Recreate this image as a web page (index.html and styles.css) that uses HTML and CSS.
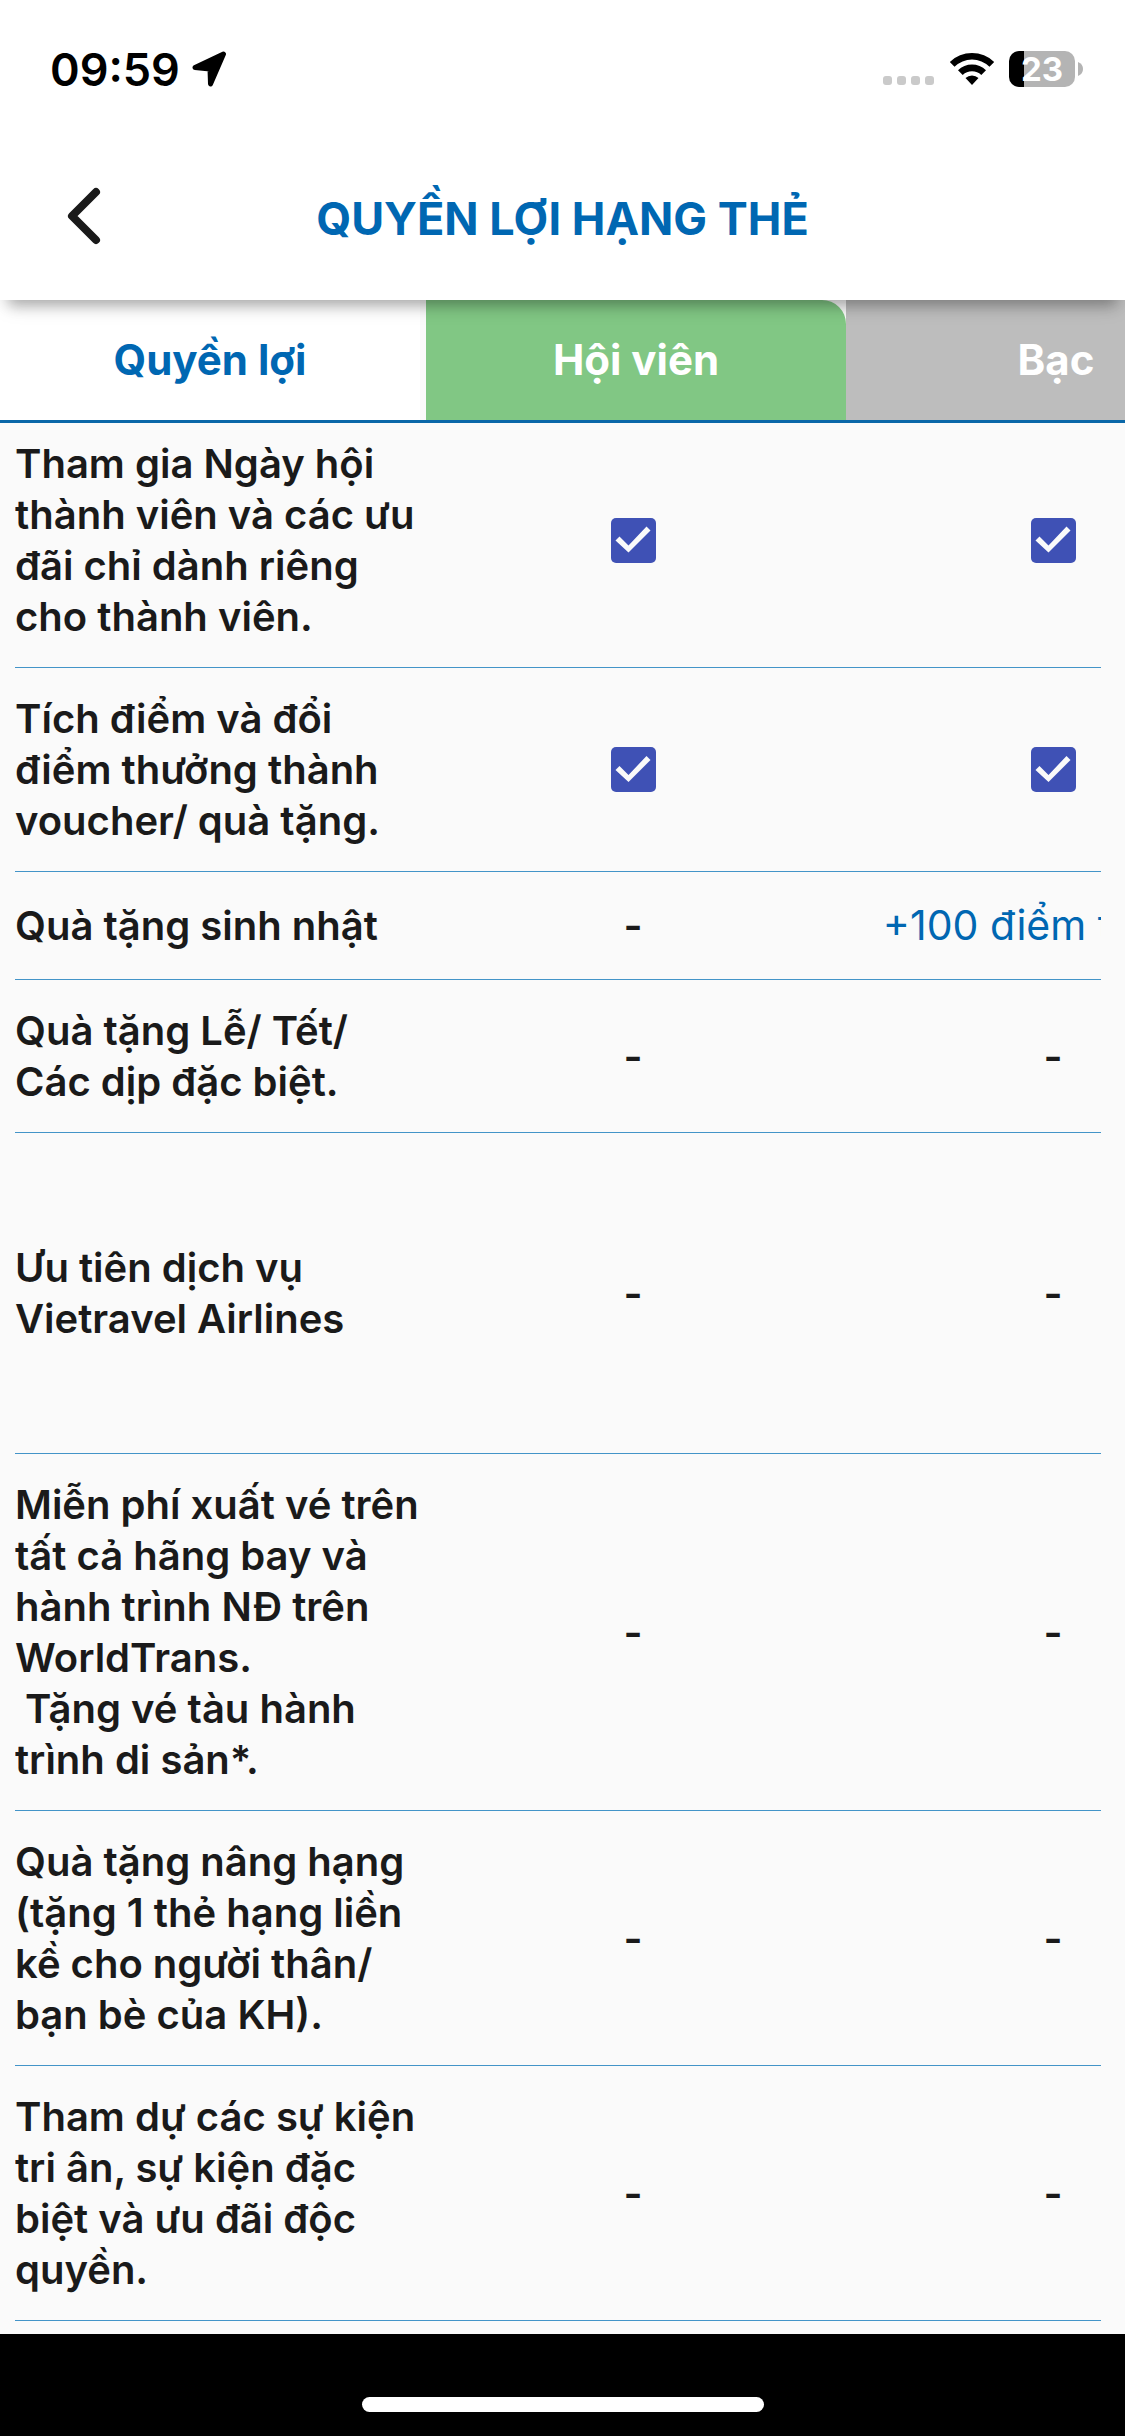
FILE: index.html
```html
<!DOCTYPE html>
<html lang="vi">
<head>
<meta charset="utf-8">
<meta name="viewport" content="width=device-width, initial-scale=1">
<title>Quyền lợi hạng thẻ</title>
<link rel="stylesheet" href="styles.css">
</head>
<body>
<header class="top">
  <div class="status">
    <div class="status-left">
      <span class="clock">09:59</span>
      <svg class="location" viewBox="0 0 36 36" aria-hidden="true"><path d="M3 16.500 L31.500 3 L18.500 33 L18 18 Z" fill="#000" stroke="#000" stroke-width="5" stroke-linejoin="round"/></svg>
    </div>
    <div class="status-right">
      <svg class="signal" viewBox="0 0 52 36" aria-hidden="true"><g fill="#cacaca"><rect y="25" width="9" height="9" rx="3"/><rect x="14" y="25" width="9" height="9" rx="3"/><rect x="28" y="25" width="9" height="9" rx="3"/><rect x="42" y="25" width="9" height="9" rx="3"/></g></svg>
      <svg class="wifi" viewBox="0 0 46 36" aria-hidden="true"><path d="M0.800 11 A32 32 0 0 1 45.200 11 L40.500 15.700 A25 25 0 0 0 5.500 15.700 Z M9 19.300 A20 20 0 0 1 37 19.300 L32.300 24 A13.400 13.400 0 0 0 13.700 24 Z M16.500 27 A9.500 9.500 0 0 1 29.500 27 L23 34 Z" fill="#000"/></svg>
      <span class="battery"><span class="battery-body">23</span><svg class="battery-cap" viewBox="0 0 5 14" aria-hidden="true"><path d="M0 0 Q5 2 5 7 Q5 12 0 14 Z" fill="#b4b4b4"/></svg></span>
    </div>
  </div>
  <nav class="app-bar">
    <button class="back" type="button" aria-label="Quay lại"><svg viewBox="0 0 34 58" aria-hidden="true"><path d="M29 5 L5 29 L29 53" fill="none" stroke="#1a1a1a" stroke-width="8" stroke-linecap="round" stroke-linejoin="round"/></svg></button>
    <h1 class="title">QUYỀN LỢI HẠNG THẺ</h1>
  </nav>
</header>
<main class="content">
  <table class="benefits">
    <thead>
      <tr>
        <th class="head-label" scope="col">Quyền lợi</th>
        <th class="head-member" scope="col"><span class="tier">Hội viên</span></th>
        <th class="head-silver" scope="col">Bạc</th>
      </tr>
    </thead>
    <tbody>
      <tr class="first">
        <th scope="row">Tham gia Ngày hội thành viên và các ưu đãi chỉ dành riêng cho thành viên.</th>
        <td><input type="checkbox" checked aria-label="Hội viên"></td>
        <td><input type="checkbox" checked aria-label="Bạc"></td>
      </tr>
      <tr>
        <th scope="row">Tích điểm và đổi điểm thưởng thành voucher/ quà tặng.</th>
        <td><input type="checkbox" checked aria-label="Hội viên"></td>
        <td><input type="checkbox" checked aria-label="Bạc"></td>
      </tr>
      <tr>
        <th scope="row">Quà tặng sinh nhật</th>
        <td>-</td>
        <td class="points">+100 điểm thưởng</td>
      </tr>
      <tr>
        <th scope="row">Quà tặng Lễ/ Tết/<br>Các dịp đặc biệt.</th>
        <td>-</td>
        <td>-</td>
      </tr>
      <tr class="tall">
        <th scope="row">Ưu tiên dịch vụ Vietravel Airlines</th>
        <td>-</td>
        <td>-</td>
      </tr>
      <tr>
        <th scope="row">Miễn phí xuất vé trên tất cả hãng bay và hành trình NĐ trên WorldTrans.<br>&nbsp;Tặng vé tàu hành trình di sản*.</th>
        <td>-</td>
        <td>-</td>
      </tr>
      <tr>
        <th scope="row">Quà tặng nâng hạng (tặng 1 thẻ hạng liền kề cho người thân/<br>bạn bè của KH).</th>
        <td>-</td>
        <td>-</td>
      </tr>
      <tr>
        <th scope="row">Tham dự các sự kiện tri ân, sự kiện đặc biệt và ưu đãi độc quyền.</th>
        <td>-</td>
        <td>-</td>
      </tr>
    </tbody>
  </table>
</main>
<footer class="home"><span class="home-bar"></span></footer>
</body>
</html>
```
FILE: styles.css
```css
* { box-sizing: border-box; }

body {
  margin: 0;
  min-height: 100vh;
  display: flex;
  flex-direction: column;
  background: #fafafa;
  color: #1a1a1a;
  font-family: Inter, "Noto Sans", sans-serif;
}

.top {
  position: relative;
  z-index: 1;
  background: #fff;
  box-shadow: 0 15px 12px -9px rgba(0, 0, 0, 0.22), 0 9px 21px -6px rgba(0, 0, 0, 0.18);
}

.status {
  height: 132px;
  padding: 6px 42px 0 50px;
  display: flex;
  align-items: center;
  justify-content: space-between;
  color: #000;
}

.status-left { display: flex; align-items: center; gap: 12px; }
.status-right { display: flex; align-items: center; gap: 14px; }
.clock { font-size: 45px; font-weight: 600; }
.location { width: 36px; height: 36px; }
.signal { width: 52px; height: 36px; }
.wifi { width: 46px; height: 36px; }
.battery { display: flex; align-items: center; gap: 3px; }

.battery-body {
  width: 66px;
  height: 36px;
  border-radius: 10px;
  background: linear-gradient(to right, #000 15px, #b4b4b4 15px);
  color: #fff;
  font-size: 33px;
  font-weight: 700;
  line-height: 36px;
  text-align: center;
}

.battery-cap { width: 5px; height: 14px; }

.app-bar {
  height: 168px;
  padding: 0 60px;
  display: grid;
  grid-template-columns: 1fr auto 1fr;
  align-items: center;
}

.back {
  width: 48px;
  height: 72px;
  padding: 0 7px;
  border: 0;
  background: none;
}

.back svg { display: block; width: 34px; height: 58px; }

.title {
  margin: 0;
  padding-top: 6px;
  color: #0067b2;
  font-size: 45px;
  font-weight: 700;
  line-height: 60px;
}

.content { flex: 1; overflow: hidden; padding-bottom: 13px; }

.benefits, .benefits thead, .benefits tbody { display: block; }

.benefits tr {
  display: grid;
  grid-template-columns: 408px 420px 420px;
  align-items: center;
}

.benefits thead tr {
  grid-template-columns: 426px 420px 420px;
  border-bottom: 3px solid #0a67a8;
  font-size: 42px;
  line-height: 120px;
}

.benefits thead th { padding: 0; font-weight: 700; color: #fff; }
.benefits thead .head-label { background: #fff; color: #0067b2; border-right: 6px solid #fafafa; }
.tier { display: block; background: #81c784; border-top-right-radius: 24px; }
.benefits thead .head-silver { background: #bdbdbd; }

.benefits tbody tr {
  min-height: 108px;
  margin: 0 24px 0 15px;
  padding: 25px 0;
  border-bottom: 1px solid #4394c8;
  overflow: hidden;
}

.benefits tbody .first { padding-top: 15px; }
.benefits tbody .tall { min-height: 321px; }

.benefits tbody th {
  padding: 0;
  text-align: left;
  font-size: 40px;
  font-weight: 600;
  line-height: 51px;
}

.benefits td {
  padding: 0;
  text-align: center;
  font-size: 41px;
  font-weight: 600;
  line-height: 51px;
  white-space: nowrap;
}

.benefits .points { padding-left: 10px; color: #0067b2; font-weight: 400; }

input[type="checkbox"] {
  appearance: none;
  display: block;
  width: 45px;
  height: 45px;
  margin: 0 auto;
  border-radius: 5px;
  background: #3f51b5;
}

input[type="checkbox"]:checked::before {
  content: "";
  display: block;
  height: 45px;
  background: #fafafa;
  clip-path: polygon(18px 35px, 5px 23px, 9px 19px, 18px 28px, 36px 9px, 40px 13px);
}

.home {
  height: 102px;
  padding-top: 12px;
  display: flex;
  align-items: center;
  justify-content: center;
  background: #000;
}

.home-bar { width: 402px; height: 15px; margin-top: 27px; border-radius: 8px; background: #fff; }
```
